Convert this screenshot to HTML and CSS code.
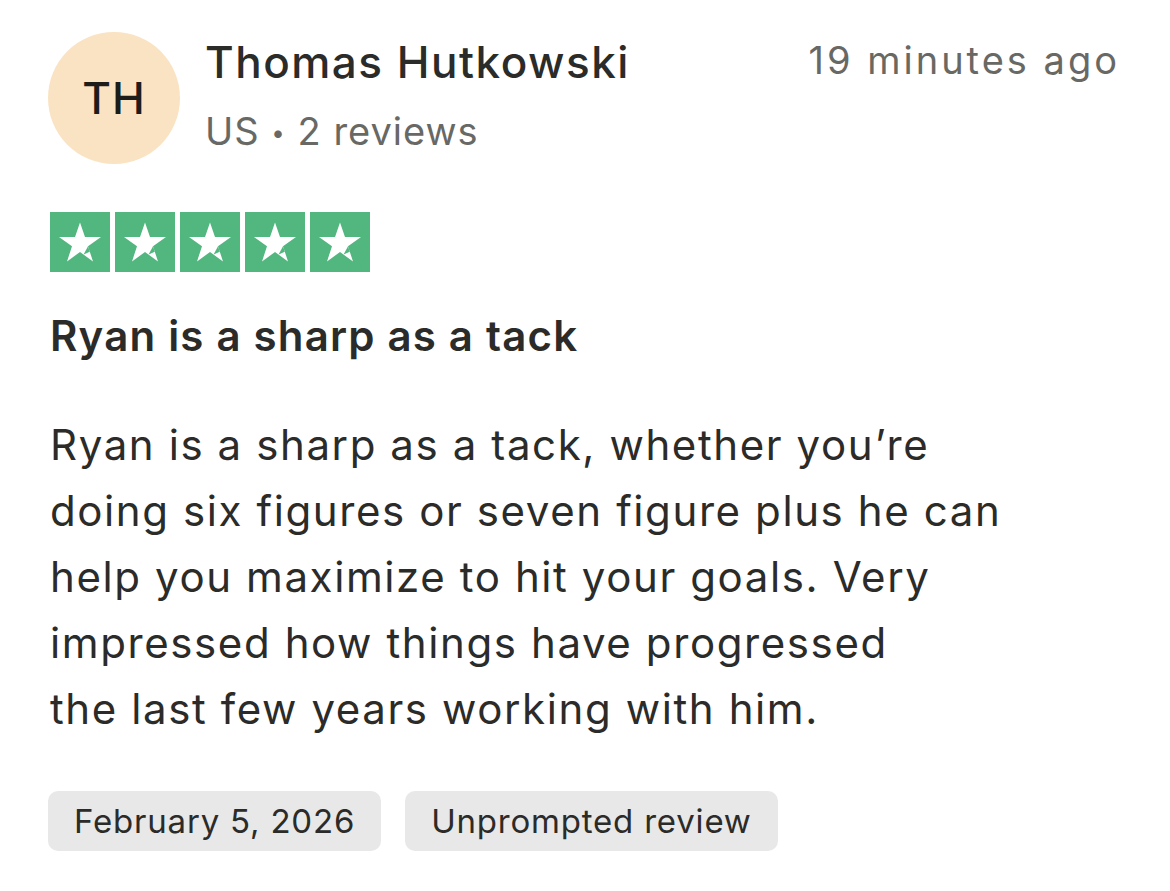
FILE: index.html
```html
<!DOCTYPE html>
<html>
<head>
<meta charset="utf-8">
<link rel="stylesheet" href="styles.css">
</head>
<body>
<div class="review">
  <div class="header">
    <div class="avatar">TH</div>
    <div class="who">
      <div class="name">Thomas Hutkowski</div>
      <div class="meta">US <span class="dot">•</span> 2 reviews</div>
    </div>
    <div class="time">19 minutes ago</div>
  </div>
  <div class="stars">
    <span class="star"><svg viewBox="0 0 60 60"><polygon points="30,10.5 35,25 51,25 38,34.2 43,49.5 30,40 17,49.5 22,34.2 9,25 25,25" fill="#fff"/><path d="M33.6 42.6 L38 34.2 L39.8 39.8 Z" fill="#52b67f"/></svg></span>
    <span class="star"><svg viewBox="0 0 60 60"><polygon points="30,10.5 35,25 51,25 38,34.2 43,49.5 30,40 17,49.5 22,34.2 9,25 25,25" fill="#fff"/><path d="M33.6 42.6 L38 34.2 L39.8 39.8 Z" fill="#52b67f"/></svg></span>
    <span class="star"><svg viewBox="0 0 60 60"><polygon points="30,10.5 35,25 51,25 38,34.2 43,49.5 30,40 17,49.5 22,34.2 9,25 25,25" fill="#fff"/><path d="M33.6 42.6 L38 34.2 L39.8 39.8 Z" fill="#52b67f"/></svg></span>
    <span class="star"><svg viewBox="0 0 60 60"><polygon points="30,10.5 35,25 51,25 38,34.2 43,49.5 30,40 17,49.5 22,34.2 9,25 25,25" fill="#fff"/><path d="M33.6 42.6 L38 34.2 L39.8 39.8 Z" fill="#52b67f"/></svg></span>
    <span class="star"><svg viewBox="0 0 60 60"><polygon points="30,10.5 35,25 51,25 38,34.2 43,49.5 30,40 17,49.5 22,34.2 9,25 25,25" fill="#fff"/><path d="M33.6 42.6 L38 34.2 L39.8 39.8 Z" fill="#52b67f"/></svg></span>
  </div>
  <h2 class="title">Ryan is a sharp as a tack</h2>
  <p class="body">Ryan is a sharp as a tack, whether you’re<br>doing six figures or seven figure plus he can<br>help you maximize to hit your goals. Very<br>impressed how things have progressed<br>the last few years working with him.</p>
  <div class="tags">
    <span class="tag">February 5, 2026</span>
    <span class="tag">Unprompted review</span>
  </div>
</div>
</body>
</html>
```

FILE: styles.css
```css
html, body {
  margin: 0;
  padding: 0;
  background: #ffffff;
}
body {
  font-family: Inter, "Noto Sans", sans-serif;
  color: #2b2b29;
}
.review {
  padding: 32px 50px 0 48px;
}
.header {
  display: flex;
  align-items: flex-start;
}
.avatar {
  width: 132px;
  height: 132px;
  border-radius: 50%;
  background: #fae3c3;
  display: flex;
  align-items: center;
  justify-content: center;
  font-size: 44px;
  font-weight: 500;
  letter-spacing: 1px;
  color: #1c1c1a;
  flex: none;
}
.who {
  margin-left: 25px;
  flex: 1;
  padding-top: 2px;
}
.name {
  font-size: 44px;
  font-weight: 500;
  line-height: 56px;
  letter-spacing: 1.5px;
  color: #2b2b29;
}
.meta {
  font-size: 38px;
  line-height: 56px;
  margin-top: 13px;
  letter-spacing: 1px;
  color: #686864;
}
.dot {
  font-size: 24px;
  vertical-align: 4px;
}
.time {
  font-size: 38px;
  line-height: 56px;
  letter-spacing: 3px;
  color: #686864;
  padding-top: 0;
}
.stars {
  display: flex;
  gap: 5px;
  margin: 48px 0 0 2px;
}
.star {
  width: 60px;
  height: 60px;
  background: #52b67f;
  display: block;
}
.star svg {
  width: 60px;
  height: 60px;
  display: block;
}
.title {
  margin: 36px 0 0 2px;
  font-size: 42px;
  font-weight: 600;
  line-height: 56px;
  letter-spacing: 1.2px;
  color: #2b2b29;
}
.body {
  margin: 48px 0 0 2px;
  font-size: 42px;
  line-height: 66px;
  letter-spacing: 1.6px;
  color: #2b2b29;
}
.tags {
  display: flex;
  gap: 24px;
  margin-top: 49px;
}
.tag {
  background: #e8e8e8;
  border-radius: 10px;
  height: 60px;
  padding: 0 26px;
  display: flex;
  align-items: center;
  font-size: 33px;
  letter-spacing: 0.8px;
  color: #2b2b29;
}
```
